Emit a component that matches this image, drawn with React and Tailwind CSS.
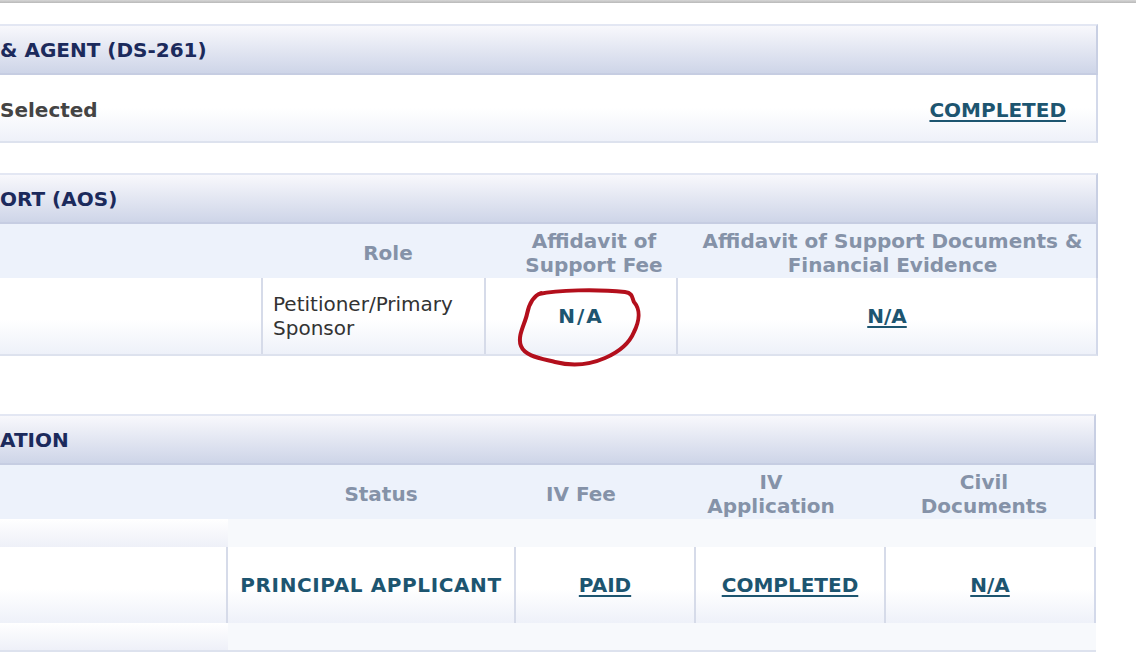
import React from 'react';

const font = { fontFamily: '"DejaVu Sans", Verdana, sans-serif' };

const PanelHeader = ({ title }) => (
    <div className="h-[51px] border-t-2 border-t-[#e3e7f3] border-b-2 border-b-[#c6cde2] border-r-2 border-r-[#c8cfe3] bg-gradient-to-b from-[#f8f8fc] to-[#ced5e8] flex items-center">
        <h3 className="text-[20px] font-bold text-[#1b2a5c]">{title}</h3>
    </div>
);

const HeadCell = ({ width, children }) => (
    <div className={`${width} flex items-center justify-center text-center text-[20px] font-bold leading-[24px] text-[#8592a8]`}>
        {children}
    </div>
);

const LinkText = ({ children }) => (
    <a href="#" className="text-[20px] font-bold text-[#1d5570] underline underline-offset-[3px] decoration-[1.5px]">
        {children}
    </a>
);

const RedCircle = () => (
    <svg className="absolute left-[31px] top-[10px] pointer-events-none" width="128" height="84" viewBox="0 0 128 84" fill="none">
        <path
            d="M22 6 C40 2 80 1 108 4 C116 5 115 10 117 14 C124 22 122 34 117 44 C112 56 102 64 88 70 C72 77 54 78 38 74 C22 70 8 68 4 58 C0 48 8 36 10 26 C12 16 16 8 24 5"
            stroke="#b30f1c"
            strokeWidth="4"
            strokeLinecap="round"
            strokeLinejoin="round"
        />
    </svg>
);

const App = () => {
    return (
        <div className="w-[1136px] h-[666px] bg-white overflow-hidden" style={font}>
            <div className="h-[3px] bg-gradient-to-b from-[#d6d6d6] to-[#b9b9b9]" />

            {/* Panel 1 */}
            <div className="w-[1098px] mt-[21px]">
                <PanelHeader title="& AGENT (DS-261)" />
                <div className="h-[68px] pt-1 border-r-2 border-r-[#d3d9ea] border-b-2 border-b-[#dde2ee] bg-gradient-to-b from-white from-50% to-[#eef1f9] flex items-center justify-between pr-[30px]">
                    <span className="text-[20px] font-bold text-[#444]">Selected</span>
                    <LinkText>COMPLETED</LinkText>
                </div>
            </div>

            {/* Panel 2 */}
            <div className="w-[1098px] mt-[30px]">
                <PanelHeader title="ORT (AOS)" />
                <div className="h-[54px] pt-1 bg-[#edf2fb] border-r-2 border-r-[#c8cfe3] flex">
                    <HeadCell width="w-[263px]"></HeadCell>
                    <HeadCell width="w-[250px]">Role</HeadCell>
                    <HeadCell width="w-[162px]">Affidavit of<br />Support Fee</HeadCell>
                    <HeadCell width="w-[421px] pl-[14px]">Affidavit of Support Documents &amp;<br />Financial Evidence</HeadCell>
                </div>
                <div className="h-[78px] border-r-2 border-r-[#d3d9ea] border-b-2 border-b-[#dde2ee] bg-gradient-to-b from-white from-55% to-[#eef1f9] flex">
                    <div className="w-[263px] border-r-2 border-r-[#d6dbe9]" />
                    <div className="w-[223px] border-r-2 border-r-[#d6dbe9] flex items-center pl-[10px] text-[20px] leading-[24px] text-[#333]">
                        Petitioner/Primary<br />Sponsor
                    </div>
                    <div className="relative w-[192px] border-r-2 border-r-[#d6dbe9] flex items-center justify-center">
                        <span className="text-[20px] font-bold text-[#1d5570] tracking-[2px]">N/A</span>
                        <RedCircle />
                    </div>
                    <div className="flex-1 flex items-center justify-center">
                        <LinkText>N/A</LinkText>
                    </div>
                </div>
            </div>

            {/* Panel 3 */}
            <div className="w-[1096px] mt-[58px]">
                <PanelHeader title="ATION" />
                <div className="h-[54px] pt-1 bg-[#edf2fb] border-r-2 border-r-[#c8cfe3] flex">
                    <HeadCell width="w-[246px]"></HeadCell>
                    <HeadCell width="w-[270px]">Status</HeadCell>
                    <HeadCell width="w-[130px]">IV Fee</HeadCell>
                    <HeadCell width="w-[250px]">IV<br />Application</HeadCell>
                    <HeadCell width="w-[176px]">Civil<br />Documents</HeadCell>
                </div>
                <div className="h-[28px] flex">
                    <div className="w-[228px] bg-gradient-to-b from-white to-[#eef0f8]" />
                    <div className="flex-1 bg-[#f7f9fc]" />
                </div>
                <div className="h-[76px] border-r-2 border-r-[#d3d9ea] bg-gradient-to-b from-white from-55% to-[#eef1f9] flex">
                    <div className="w-[228px] border-r-2 border-r-[#d6dbe9]" />
                    <div className="w-[288px] border-r-2 border-r-[#d6dbe9] flex items-center justify-center">
                        <span className="text-[20px] font-bold text-[#1d5570] tracking-[0.6px]">PRINCIPAL APPLICANT</span>
                    </div>
                    <div className="w-[180px] border-r-2 border-r-[#d6dbe9] flex items-center justify-center">
                        <LinkText>PAID</LinkText>
                    </div>
                    <div className="w-[190px] border-r-2 border-r-[#d6dbe9] flex items-center justify-center">
                        <LinkText>COMPLETED</LinkText>
                    </div>
                    <div className="flex-1 flex items-center justify-center">
                        <LinkText>N/A</LinkText>
                    </div>
                </div>
                <div className="h-[29px] flex border-b-2 border-b-[#dde2ee]">
                    <div className="w-[228px] bg-gradient-to-b from-white to-[#eef0f8]" />
                    <div className="flex-1 bg-[#f7f9fc]" />
                </div>
            </div>
        </div>
    );
};

export default App;
